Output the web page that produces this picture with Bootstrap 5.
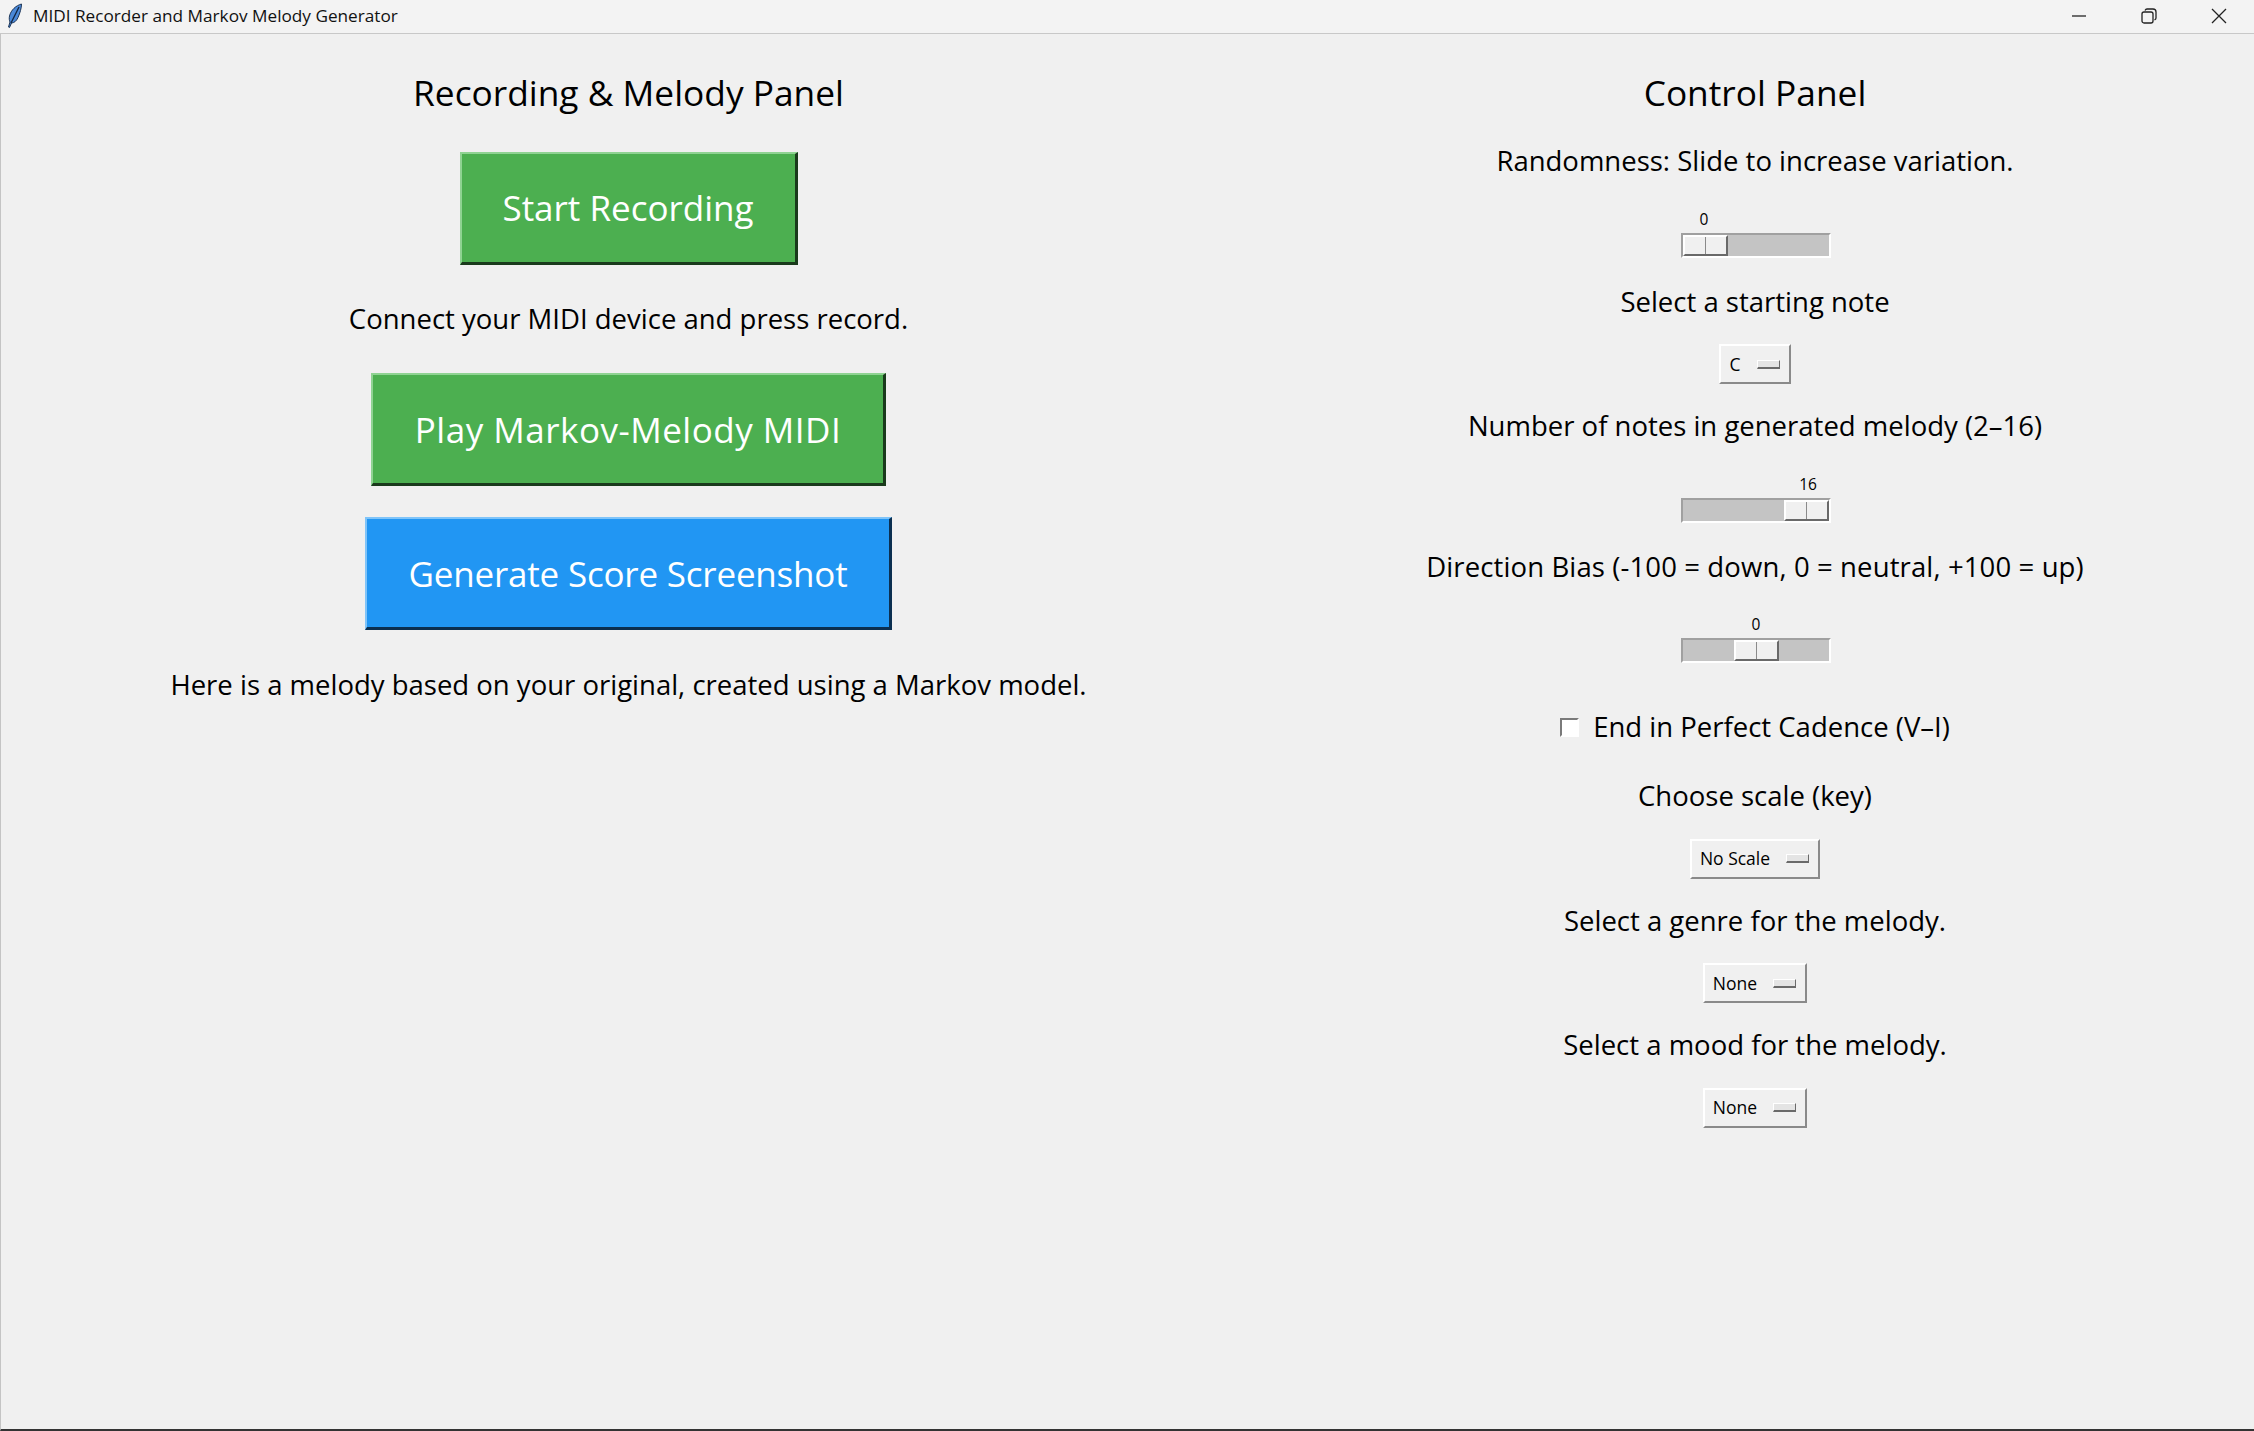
<!DOCTYPE html>
<html lang="en">
<head>
    <meta charset="UTF-8">
    <meta name="viewport" content="width=device-width, initial-scale=1.0">
    <title>MIDI Recorder and Markov Melody Generator</title>
    <link href="https://cdn.jsdelivr.net/npm/bootstrap@5.3.0/dist/css/bootstrap.min.css" rel="stylesheet">
    <script src="https://cdn.jsdelivr.net/npm/bootstrap@5.3.0/dist/js/bootstrap.bundle.min.js"></script>
    <style>
        html, body {
            height: 100%;
        }
        body {
            background: #f0f0f0;
            color: #000;
            font-family: "Open Sans", "Noto Sans", sans-serif;
            overflow: hidden;
        }
        .app-window {
            height: 1431px;
            border-left: 1px solid #c4c4c4;
            border-bottom: 2px solid #333;
        }
        .title-bar {
            height: 34px;
            margin-left: -1px;
            padding-bottom: 2px;
            background: #f3f3f3;
            border-bottom: 1px solid #c8c8c8;
            font-size: 17.200px;
            color: #111;
        }
        .title-icon {
            margin-left: 7px;
            margin-right: 10px;
        }
        .win-btn {
            width: 70px;
            height: 31px;
        }
        .panel-left {
            width: 1255px;
        }
        .panel-right {
            width: 998px;
        }
        .panel-title {
            height: 46px;
            margin-top: 35px;
            font-size: 35.300px;
            line-height: 46px;
        }
        .tk-label {
            height: 40px;
            line-height: 40px;
            margin-top: 24px;
            font-size: 27.500px;
        }
        .panel-title + .tk-label {
            margin-top: 26px;
        }
        .tk-menu + .tk-label {
            margin-top: 22px;
        }
        .wide-text {
            letter-spacing: .12px;
        }
        .tk-big {
            height: 113px;
            font-size: 35px;
            line-height: 1;
            color: #fff;
            border-radius: 0;
            border-width: 2px 3px 3px 2px;
            border-style: solid;
            padding: 0;
        }
        .tk-green, .tk-green:hover {
            background: #4caf50;
            color: #fff;
            border-color: #8fd392 #1a3a1c #1a3a1c #8fd392;
        }
        .tk-blue, .tk-blue:hover {
            background: #2196f3;
            color: #fff;
            border-color: #7fc4f9 #0b2f50 #0b2f50 #7fc4f9;
        }
        .start-btn { width: 338px; margin-top: 37px; padding-bottom: 2px; }
        .play-btn { width: 515px; margin-top: 34px; letter-spacing: .5px; }
        .score-btn { width: 527px; margin-top: 31px; letter-spacing: -.2px; }
        .tk-label.connect-text { margin-top: 34px; }
        .tk-label.markov-text { margin-top: 35px; }
        .tk-scale {
            width: 150px;
            margin-top: 27.500px;
            margin-left: 2px;
        }
        .scale-value {
            width: 46px;
            height: 24px;
            font-size: 15.500px;
            line-height: 20px;
            text-align: center;
        }
        .scale-track {
            height: 25px;
            background: #c4c4c4;
            border: 2px solid;
            border-color: #a0a0a0 #fff #fff #a0a0a0;
        }
        .scale-thumb {
            width: 45px;
            height: 21px;
            background: linear-gradient(90deg, #f0f0f0 48%, #8a8a8a 48%, #8a8a8a 52%, #f0f0f0 52%);
            border: 2px solid;
            border-color: #fff #696969 #696969 #fff;
        }
        .tk-menu {
            height: 40px;
            margin-top: 22.500px;
            padding: 0 0 0 8px;
            gap: 16px;
            background: #f0f0f0;
            border: 2px solid;
            border-color: #fff #8a8a8a #8a8a8a #fff;
            border-radius: 0;
            font-size: 17.500px;
            color: #000;
        }
        .tk-menu:hover {
            background: #f0f0f0;
            border-color: #fff #8a8a8a #8a8a8a #fff;
        }
        .menu-mark {
            width: 23px;
            height: 9px;
            margin-right: 9px;
            background: #e4e4e4;
            border: 1px solid;
            border-color: #fff #6a6a6a #6a6a6a #fff;
            border-bottom-width: 2px;
        }
        .tk-label.check-row {
            margin-top: 44px;
            gap: 14px;
        }
        .check-row + .tk-label {
            margin-top: 29px;
        }
        .form-check-input.tk-box {
            width: 19px;
            height: 19px;
            margin: 0;
            border-radius: 0;
            border: 2px solid;
            border-color: #7a7a7a #fff #fff #7a7a7a;
            background: #fff;
        }
    </style>
</head>
<body>
    <div class="app-window d-flex flex-column">
        <!-- Title bar -->
        <div class="title-bar d-flex align-items-center">
            <svg class="title-icon" width="16" height="25" viewBox="0 0 16 25">
                <path d="M14.500 1C9 2.500 4 7 2.500 13c-.5 2.500-.2 4.500.5 6l-1.500 5 1 .5L4.500 20c2.500 0 5-2 6.500-5.500C13 10 14.500 5 14.500 1z" fill="#4a88d8" stroke="#1d3557" stroke-width="1"/>
                <path d="M12 4 4 20" stroke="#12233c" stroke-width="1.200" fill="none"/>
            </svg>
            <span class="flex-grow-1">MIDI Recorder and Markov Melody Generator</span>
            <div class="win-btn d-flex align-items-center justify-content-center">
                <svg width="16" height="16" viewBox="0 0 16 16"><path d="M1 8h14" stroke="#222" stroke-width="1.300"/></svg>
            </div>
            <div class="win-btn d-flex align-items-center justify-content-center">
                <svg width="16" height="16" viewBox="0 0 16 16" fill="none" stroke="#222" stroke-width="1.300"><rect x="1" y="4" width="11" height="11" rx="2"/><path d="M4 2.500c.5-1 1-1.500 2-1.500h6c2 0 3 1 3 3v6c0 1-.5 1.500-1.500 2"/></svg>
            </div>
            <div class="win-btn d-flex align-items-center justify-content-center">
                <svg width="16" height="16" viewBox="0 0 16 16"><path d="M1 1l14 14M15 1 1 15" stroke="#222" stroke-width="1.300"/></svg>
            </div>
        </div>

        <div class="d-flex flex-grow-1">
            <!-- Recording panel -->
            <div class="panel-left d-flex flex-column align-items-center">
                <div class="panel-title">Recording &amp; Melody Panel</div>
                <button type="button" class="btn tk-big tk-green start-btn">Start Recording</button>
                <div class="tk-label connect-text">Connect your MIDI device and press record.</div>
                <button type="button" class="btn tk-big tk-green play-btn">Play Markov-Melody MIDI</button>
                <button type="button" class="btn tk-big tk-blue score-btn">Generate Score Screenshot</button>
                <div class="tk-label markov-text">Here is a melody based on your original, created using a Markov model.</div>
            </div>

            <!-- Control panel -->
            <div class="panel-right d-flex flex-column align-items-center">
                <div class="panel-title">Control Panel</div>
                <div class="tk-label">Randomness: Slide to increase variation.</div>
                <div class="tk-scale">
                    <div class="d-flex justify-content-start"><div class="scale-value">0</div></div>
                    <div class="scale-track d-flex justify-content-start"><div class="scale-thumb"></div></div>
                </div>
                <div class="tk-label">Select a starting note</div>
                <button type="button" class="btn tk-menu d-flex align-items-center">C<span class="menu-mark"></span></button>
                <div class="tk-label">Number of notes in generated melody (2–16)</div>
                <div class="tk-scale">
                    <div class="d-flex justify-content-end"><div class="scale-value">16</div></div>
                    <div class="scale-track d-flex justify-content-end"><div class="scale-thumb"></div></div>
                </div>
                <div class="tk-label wide-text">Direction Bias (-100 = down, 0 = neutral, +100 = up)</div>
                <div class="tk-scale">
                    <div class="d-flex justify-content-center"><div class="scale-value">0</div></div>
                    <div class="scale-track d-flex justify-content-center"><div class="scale-thumb"></div></div>
                </div>
                <label class="check-row tk-label d-flex align-items-center">
                    <input type="checkbox" class="form-check-input tk-box">
                    <span>End in Perfect Cadence (V–I)</span>
                </label>
                <div class="tk-label">Choose scale (key)</div>
                <button type="button" class="btn tk-menu d-flex align-items-center">No Scale<span class="menu-mark"></span></button>
                <div class="tk-label">Select a genre for the melody.</div>
                <button type="button" class="btn tk-menu d-flex align-items-center">None<span class="menu-mark"></span></button>
                <div class="tk-label">Select a mood for the melody.</div>
                <button type="button" class="btn tk-menu d-flex align-items-center">None<span class="menu-mark"></span></button>
            </div>
        </div>
    </div>
</body>
</html>
